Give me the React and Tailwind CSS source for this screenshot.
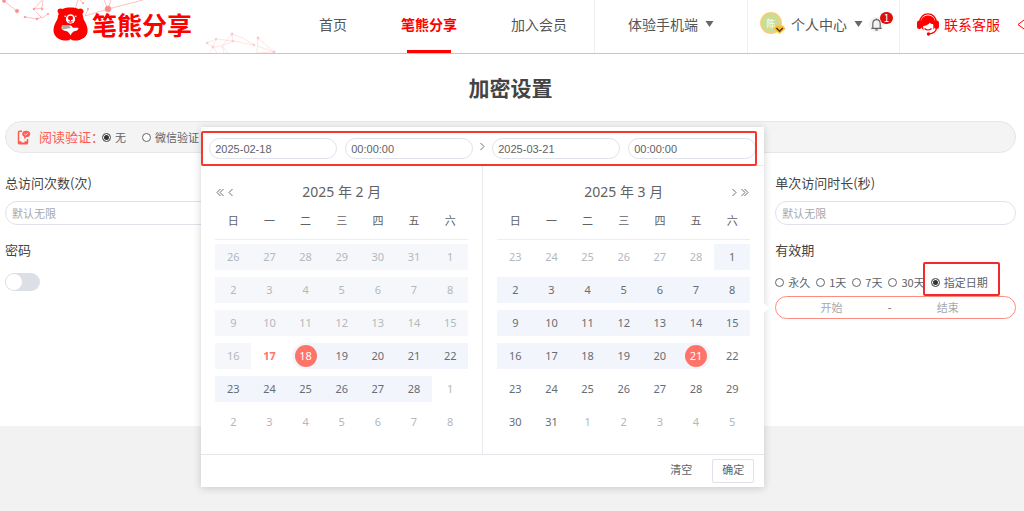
import React from 'react';

const WEEK = ['日', '一', '二', '三', '四', '五', '六'];

const span = (from, to, kind) =>
  Array.from({ length: to - from + 1 }, (_, i) => ({ day: from + i, kind }));

const FEBRUARY = [
  ...span(26, 31, 'disabled'),
  ...span(1, 16, 'disabled'),
  { day: 17, kind: 'today' },
  { day: 18, kind: 'start' },
  ...span(19, 28, 'range'),
  ...span(1, 8, 'outside'),
];

const MARCH = [
  ...span(23, 28, 'outside'),
  ...span(1, 20, 'range'),
  { day: 21, kind: 'end' },
  ...span(22, 31, 'plain'),
  ...span(1, 5, 'outside'),
];

const CELL = {
  disabled: 'bg-[#f5f7fa] text-[#b4b7bd]',
  outside: 'text-[#b4b7bd]',
  plain: 'text-[#6a6c70]',
  range: 'bg-[#f2f5fc] text-[#6a6c70]',
  today: 'font-bold text-[#ff7468]',
  start: 'ml-1 rounded-l-full bg-[#f2f5fc] pr-1 text-white',
  end: 'mr-1 rounded-r-full bg-[#f2f5fc] pl-1 text-white',
};

function Chevrons({ double, right }) {
  return (
    <svg
      className={right ? 'h-[9px] rotate-180' : 'h-[9px]'}
      viewBox={double ? '0 0 8 9' : '0 0 5 9'}
      fill="none"
      stroke="#6b6e73"
      strokeWidth="1"
    >
      <path d="M4.500 1 1 4.500 4.500 8" />
      {double && <path d="M7.500 1 4 4.500 7.500 8" />}
    </svg>
  );
}

function Month({ title, days, right }) {
  const rows = [0, 1, 2, 3, 4, 5].map((r) => days.slice(r * 7, r * 7 + 7));
  const arrows = [
    <button key="y" type="button" aria-label={right ? '后一年' : '前一年'}>
      <Chevrons double right={right} />
    </button>,
    <button key="m" type="button" aria-label={right ? '下个月' : '上个月'}>
      <Chevrons right={right} />
    </button>,
  ];
  return (
    <div className="min-w-0 flex-1 px-[14px] pt-[15px] pb-[15px]">
      <div className="grid h-[22px] grid-cols-[32px_1fr_32px] items-center">
        <div className="flex items-center gap-1 pl-px">{!right && arrows}</div>
        <div className="text-center text-sm leading-[22px] text-[#606266]">{title}</div>
        <div className="flex flex-row-reverse items-center gap-1 pr-px">{right && arrows}</div>
      </div>
      <table className="w-full table-fixed border-collapse text-center text-[11px] leading-4">
        <thead>
          <tr className="h-9 border-b border-[#ebeef5]">
            {WEEK.map((d) => (
              <th key={d} className="p-0 font-normal text-[#606266]">{d}</th>
            ))}
          </tr>
        </thead>
        <tbody className="before:block before:h-px">
          {rows.map((row, i) => (
            <tr key={i} className="h-[33px]">
              {row.map(({ day, kind }, j) => (
                <td key={j} className="p-0">
                  <div className={`flex h-[26px] items-center justify-center ${CELL[kind]}`}>
                    <button
                      type="button"
                      className={
                        kind === 'start' || kind === 'end'
                          ? 'size-[22px] rounded-full bg-[#ff7468]'
                          : 'size-[22px]'
                      }
                    >
                      {day}
                    </button>
                  </div>
                </td>
              ))}
            </tr>
          ))}
        </tbody>
      </table>
    </div>
  );
}

function PickerInput({ label, value }) {
  return (
    <input
      type="text"
      aria-label={label}
      defaultValue={value}
      className="h-[21px] w-0 min-w-0 flex-1 rounded-full border border-[#dfe2ea] bg-white px-[5px] font-['Liberation_Sans',sans-serif] text-[11px] text-[#606266] outline-none"
    />
  );
}

function RangePicker() {
  return (
    <div className="absolute right-full -top-[170px] z-10 mr-3 w-[563px] bg-white font-['Noto_Sans','Noto_Sans_CJK_SC',sans-serif] shadow-[0_1px_8px_rgba(0,0,0,0.18)]">
      <div className="relative flex border-b border-[#e8eaef] px-2 pt-[11px] pb-[6px]">
        <div className="flex flex-1 gap-2">
          <PickerInput label="开始日期" value="2025-02-18" />
          <PickerInput label="开始时间" value="00:00:00" />
        </div>
        <div className="flex h-4 w-[19px] items-center justify-center">
          <Chevrons right />
        </div>
        <div className="flex flex-1 gap-2">
          <PickerInput label="结束日期" value="2025-03-21" />
          <PickerInput label="结束时间" value="00:00:00" />
        </div>
        <div className="pointer-events-none absolute top-1 right-[7px] -bottom-px left-0 rounded-[2px] border-2 border-[#f5382e]" />
      </div>
      <div className="flex">
        <Month title="2025 年 2 月" days={FEBRUARY} />
        <div className="w-px bg-[#e8eaef]" />
        <Month title="2025 年 3 月" days={MARCH} right />
      </div>
      <div className="flex h-[33px] items-center justify-end gap-5 border-t border-[#e4e6ec] pr-[10px] text-[11px] text-[#606266]">
        <button type="button">清空</button>
        <button type="button" className="h-6 w-[42px] rounded-[2px] border border-[#dfe2ea] bg-white">确定</button>
      </div>
      <div className="absolute bottom-[174px] left-full border-y-[5px] border-l-[5px] border-y-transparent border-l-white" />
    </div>
  );
}

function Radio({ name, label, checked, children }) {
  return (
    <label className="relative flex shrink-0 items-center gap-1 text-[11px] leading-5 whitespace-nowrap text-[#606266]">
      <input
        type="radio"
        name={name}
        defaultChecked={checked}
        className="size-[9px] appearance-none rounded-full border border-[#666] bg-white checked:bg-[#333] checked:shadow-[inset_0_0_0_1px_#fff]"
      />
      {label}
      {children}
    </label>
  );
}

function Bear() {
  return (
    <svg className="h-[34px] w-[35px]" viewBox="0 0 35 34">
      <path
        fill="#ff0000"
        d="M9.500 2C12 .6 14.500.4 17.500.4s5.500.2 8 1.600c2-1.200 4.800-.2 5 2 .1 1.300-.5 2.200-1.100 2.900.8 2 .8 4.300 1.600 6 2 3.300 3.500 6.300 3.600 10.300.1 5-3.400 8.400-8 9.700-3.500 1-7.500 1-9.100-1-1.600 2-5.600 2-9.100 1C3.800 31.600.4 28 .5 23c.1-4 1.600-7 3.600-10.300.8-1.700.8-4 1.600-6-.6-.7-1.200-1.600-1.100-2.900C4.800 1.600 7.500.8 9.500 2Z"
      />
      <path d="M9 18.500h9l2 2.300h5.500c0 2-1.500 3-3.500 3.300-2 .3-3.200 2-4.500 4.500-1.300-2.500-2.500-4.200-4.500-4.500-2-.2-3.500-.8-4.500-2.800Z" fill="#fff" />
      <path d="M9 18.800h7l2 2.200-8.500 1.500Z" fill="#aaa" />
      <circle cx="17.500" cy="12" r="4.700" fill="#fff" />
      <ellipse cx="17.500" cy="11" rx="2.600" ry="2.200" fill="#ff0000" />
      <path d="M17.500 12v2.500M15.500 14.700q2 1.200 4 0" stroke="#ff0000" fill="none" />
      <circle cx="12.200" cy="9.200" r=".8" fill="#fff" />
      <circle cx="22.800" cy="9.200" r=".8" fill="#fff" />
    </svg>
  );
}

function Network() {
  return (
    <svg className="absolute top-0 left-0 h-[53px] w-[290px]" viewBox="0 0 290 53" fill="#f88" stroke="#f99">
      <g strokeWidth=".6">
        <path fill="none" d="M4 1 17 11M34 9 42 8 43 0M36 12 42 18 48 14M25 17 37 19 42 17M34 9 42 0M80 0 83 3M108 9 104 0M108 9 111 0M108 9 143 0M108 9 85 16M75 9 78 0M88 9 85 16" />
        <circle cx="4" cy="1" r="1.500" />
        <circle cx="17" cy="11" r="1.800" />
        <circle cx="108" cy="9" r="3" />
        <circle cx="34" cy="9" r=".9" />
        <circle cx="42" cy="9" r=".9" />
        <circle cx="48" cy="14" r=".8" />
        <circle cx="25" cy="17" r=".9" />
        <circle cx="37" cy="19" r=".9" />
        <circle cx="83" cy="3" r=".8" />
        <circle cx="88" cy="9" r=".8" />
      </g>
      <g strokeWidth=".5" opacity=".5">
        <path fill="none" d="M207 43 216 39 213 47 207 43M216 39 233 41 222 46 213 47 209 53M233 41 232 34 222 46 224 53M232 34 243 38 254 45 233 41M258 38 257 53M258 38 274 52 257 46M257 53 274 52M213 47 217 53M222 46 228 53" />
        <circle cx="207" cy="43" r="1" />
        <circle cx="216" cy="39" r="1" />
        <circle cx="213" cy="47" r="1" />
        <circle cx="232" cy="34" r="1.200" />
        <circle cx="233" cy="41" r="1" />
        <circle cx="254" cy="45" r="1" />
        <circle cx="258" cy="38" r="1.200" />
        <circle cx="274" cy="52" r="1.200" />
      </g>
    </svg>
  );
}

function Caret() {
  return (
    <svg className="h-[6px] w-[9px]" viewBox="0 0 9 6">
      <path d="M.5 0h8L4.500 6Z" fill="#666" />
    </svg>
  );
}

function Avatar() {
  return (
    <svg className="size-[26px]" viewBox="0 0 26 26">
      <circle cx="11" cy="12" r="10.200" fill="#c9dd93" stroke="#fccb73" strokeWidth="1.400" />
      <text x="11" y="15.500" textAnchor="middle" fontSize="9" fill="#fff" fontFamily="Noto Sans CJK SC">陈</text>
      <path d="m16 14.500h7l2.600 3.200-6 5.300-6.100-5.300Z" fill="#fdbd36" />
      <path d="m16.400 17 3.200 3.200L22.800 17" fill="none" stroke="#5a3510" strokeWidth="1.600" />
    </svg>
  );
}

function Bell() {
  return (
    <svg className="size-[15px]" viewBox="0 0 15 15">
      <circle cx="7.500" cy="7.500" r="7.500" fill="#f2f2f2" />
      <path
        d="M7.500 1.500v1M3.800 11V7c0-2.700 1.500-4.300 3.700-4.300S11.200 4.300 11.200 7v4M2.300 11.300h10.400M6.200 12.800h2.600"
        fill="none"
        stroke="#666"
        strokeWidth="1.200"
      />
    </svg>
  );
}

function Headset() {
  return (
    <svg className="h-[23px] w-[22px]" viewBox="0 0 22 23">
      <path d="M2.800 9C3 4.200 6.300.9 11 .9s8 3.300 8.200 8.100" fill="none" stroke="#ff0000" strokeWidth="1.400" />
      <path
        d="M3.800 10C3.800 5.500 6.800 2.600 11 2.600s7.200 2.900 7.200 7.400v2c-.2 2-1.200 3.700-2.400 4.800.7-2 .7-4 .3-5.800-1.500.2-2.400-.2-3.100-1.200-1.700 2-4.200 3-6.800 3.200-.1 1.800.3 3.300 1 4.500C5 16.200 3.800 14 3.800 12Z"
        fill="#ff0000"
      />
      <rect x="0" y="7.500" width="4.800" height="8.500" rx="2.200" fill="#ff0000" />
      <rect x="17.200" y="7.500" width="4.800" height="8.500" rx="2.200" fill="#ff0000" />
      <path d="M19.500 15.500c-.7 3-3.300 5-7.500 5.500M7.500 15.500q3.500 3 7 0" fill="none" stroke="#ff0000" strokeWidth="1.200" />
      <circle cx="11.500" cy="21" r="1.700" fill="#ff0000" />
    </svg>
  );
}

function PhoneChat() {
  return (
    <svg className="h-[15px] w-[14px]" viewBox="0 0 14 15">
      <path d="M5 1.200H2.600Q1.500 1.200 1.500 2.300v10.400Q1.500 13.800 2.600 13.800h6.800Q10.500 13.800 10.500 12.700V9" fill="none" stroke="#ff5a50" strokeWidth="1.500" />
      <path d="M1.500 11.300h3v1.200h3v-1.200h3v2.500h-9Z" fill="#ff5a50" />
      <path d="M9.200.8C11.500.8 13.200 2 13.200 4S11.500 7.100 9.500 7.100L7.300 9.200 7.200 6.800C6 6.300 5.200 5.300 5.200 4 5.200 2 6.900.8 9.200.8Z" fill="#ff5a50" />
      <path d="m7.200 3.700 1.500 1.400 2.500-2.400" stroke="#fff" strokeWidth=".8" fill="none" />
    </svg>
  );
}

function Header() {
  return (
    <header className="relative flex h-[54px] overflow-hidden border-b border-[#c6c6c6] bg-white pb-[5px] text-sm whitespace-nowrap text-[#555]">
      <Network />
      <a href="#home" className="relative flex min-w-[200px] flex-1 items-center gap-1 pl-[53px] text-[25px] leading-none font-bold text-[#ff0000]">
        <Bear />
        笔熊分享
      </a>
      <nav className="relative flex items-stretch">
        <a href="#index" className="flex items-center px-[27px]">首页</a>
        <a href="#share" className="relative flex items-center px-[27px] font-bold text-[#ff0000]">
          笔熊分享
          <span className="absolute inset-x-[33px] -bottom-[5px] h-[3px] bg-[#ff0000]" />
        </a>
        <a href="#vip" className="flex items-center px-[27px]">加入会员</a>
      </nav>
      <button type="button" className="-mb-[5px] flex items-center gap-[7px] border-l border-[#efefef] px-[33px] pb-[5px]">
        体验手机端
        <Caret />
      </button>
      <div className="-mb-[5px] flex items-center border-l border-[#efefef] pr-[15px] pb-[5px] pl-[12px]">
        <button type="button" className="flex items-center gap-[5px]">
          <Avatar />
          个人中心
          <span className="ml-[2px]"><Caret /></span>
        </button>
        <button type="button" aria-label="消息" className="relative ml-[6px]">
          <Bell />
          <span className="absolute -top-[5px] -right-[9px] h-3 w-[13px] rounded-full bg-[#d9100c] text-center text-[10px] leading-3 text-white">1</span>
        </button>
      </div>
      <div className="-mb-[5px] flex items-center border-l border-[#efefef] pb-[5px] pl-[17px] text-[#ff0000]">
        <a href="#service" className="flex items-center gap-[5px]">
          <Headset />
          联系客服
        </a>
        <svg className="ml-[17px] h-[11px] w-[7px]" viewBox="0 0 7 11">
          <path d="M7 1 1 5.500 7 10" fill="none" stroke="#ff0000" />
        </svg>
      </div>
    </header>
  );
}

const labelClass = 'block h-5 text-[13px] leading-5 text-[#444]';
const inputClass =
  'mt-2 block h-6 w-full rounded-full border border-[#dfe2ea] bg-white px-[6px] text-[11px] outline-none placeholder:text-[#a5a8ae]';

export default function App() {
  return (
    <div className="min-h-screen overflow-x-hidden bg-[#f2f2f2] font-['Noto_Sans_CJK_SC',sans-serif]">
      <Header />
      <main className="bg-white pr-2 pb-[107px] pl-[5px]">
        <h1 className="flex h-[67px] items-center justify-center text-[21px] font-bold text-[#444]">加密设置</h1>
        <div className="flex h-8 items-center rounded-full border border-[#e6e7ea] bg-[#f4f4f4] pl-[11px]">
          <PhoneChat />
          <span className="ml-2 w-[63px] text-[13px] whitespace-nowrap text-[#ff5a50]">阅读验证：</span>
          <div className="flex gap-4">
            <Radio name="verify" label="无" checked />
            <Radio name="verify" label="微信验证" />
          </div>
        </div>
        <form className="mt-5 grid grid-cols-4 gap-4">
          <div>
            <label htmlFor="total" className={labelClass}>总访问次数(次)</label>
            <input id="total" type="text" placeholder="默认无限" className={inputClass} />
            <label htmlFor="password" className={`mt-[15px] ${labelClass}`}>密码</label>
            <div className="mt-3 flex h-5 items-center">
              <input
                id="password"
                type="checkbox"
                role="switch"
                className="h-[18px] w-[35px] appearance-none rounded-full bg-[#dcdfe6] before:m-px before:block before:size-4 before:rounded-full before:bg-white checked:bg-[#ff7468]"
              />
            </div>
          </div>
          <div className="col-start-4">
            <label htmlFor="duration" className={labelClass}>单次访问时长(秒)</label>
            <input id="duration" type="text" placeholder="默认无限" className={inputClass} />
            <fieldset className="mt-[15px]">
              <legend className={labelClass}>有效期</legend>
              <div className="mt-3 flex h-5 items-center gap-[6px]">
                <Radio name="expiry" label="永久" />
                <Radio name="expiry" label="1天" />
                <Radio name="expiry" label="7天" />
                <Radio name="expiry" label="30天" />
                <Radio name="expiry" label="指定日期" checked>
                  <span className="pointer-events-none absolute -top-[10px] -right-3 -bottom-[4px] -left-2 rounded-[2px] border-2 border-[#f5282a]" />
                </Radio>
              </div>
            </fieldset>
            <div className="relative mt-1 flex h-[23px] items-center rounded-full border border-[#ff8a80] bg-white pr-[21px] pl-[9px] text-[11px] text-[#666]">
              <input type="text" aria-label="开始" placeholder="开始" className="w-0 flex-1 text-center outline-none placeholder:text-[#a5a8ae]" />
              <span className="w-6 text-center">-</span>
              <input type="text" aria-label="结束" placeholder="结束" className="w-0 flex-1 text-center outline-none placeholder:text-[#a5a8ae]" />
              <RangePicker />
            </div>
          </div>
        </form>
      </main>
    </div>
  );
}
